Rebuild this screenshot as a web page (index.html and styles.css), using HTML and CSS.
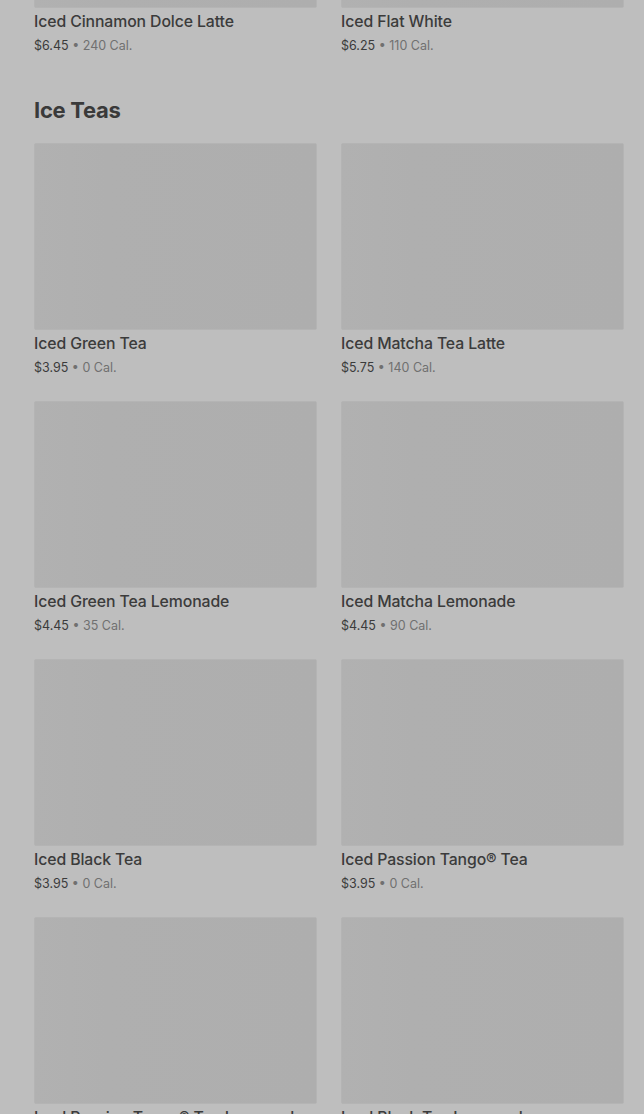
FILE: index.html
```html
<!DOCTYPE html>
<html lang="en">
<head>
    <meta charset="UTF-8">
    <meta name="viewport" content="width=device-width, initial-scale=1.0">
    <title>Menu - Ice Teas</title>
    <link rel="stylesheet" href="styles.css">
</head>
<body>
    <div class="menu-scroll">
        <!-- tail of the previous category, scrolled mostly out of view -->
        <section class="menu-category">
            <div class="product-grid">
                <div class="product-card">
                    <div class="product-image"></div>
                    <div class="product-name">Iced Cinnamon Dolce Latte</div>
                    <div class="product-meta"><span class="price">$6.45</span> • 240 Cal.</div>
                </div>
                <div class="product-card">
                    <div class="product-image"></div>
                    <div class="product-name">Iced Flat White</div>
                    <div class="product-meta"><span class="price">$6.25</span> • 110 Cal.</div>
                </div>
            </div>
        </section>

        <section class="menu-category">
            <h2 class="category-title">Ice Teas</h2>
            <div class="product-grid">
                <div class="product-card">
                    <div class="product-image"></div>
                    <div class="product-name">Iced Green Tea</div>
                    <div class="product-meta"><span class="price">$3.95</span> • 0 Cal.</div>
                </div>
                <div class="product-card">
                    <div class="product-image"></div>
                    <div class="product-name">Iced Matcha Tea Latte</div>
                    <div class="product-meta"><span class="price">$5.75</span> • 140 Cal.</div>
                </div>
                <div class="product-card">
                    <div class="product-image"></div>
                    <div class="product-name">Iced Green Tea Lemonade</div>
                    <div class="product-meta"><span class="price">$4.45</span> • 35 Cal.</div>
                </div>
                <div class="product-card">
                    <div class="product-image"></div>
                    <div class="product-name">Iced Matcha Lemonade</div>
                    <div class="product-meta"><span class="price">$4.45</span> • 90 Cal.</div>
                </div>
                <div class="product-card">
                    <div class="product-image"></div>
                    <div class="product-name">Iced Black Tea</div>
                    <div class="product-meta"><span class="price">$3.95</span> • 0 Cal.</div>
                </div>
                <div class="product-card">
                    <div class="product-image"></div>
                    <div class="product-name">Iced Passion Tango® Tea</div>
                    <div class="product-meta"><span class="price">$3.95</span> • 0 Cal.</div>
                </div>
                <div class="product-card">
                    <div class="product-image"></div>
                    <div class="product-name">Iced Passion Tango® Tea Lemonade</div>
                    <div class="product-meta"><span class="price">$4.45</span> • 70 Cal.</div>
                </div>
                <div class="product-card">
                    <div class="product-image"></div>
                    <div class="product-name">Iced Black Tea Lemonade</div>
                    <div class="product-meta"><span class="price">$4.45</span> • 70 Cal.</div>
                </div>
            </div>
        </section>
    </div>
</body>
</html>
```

FILE: styles.css
```css
:root {
    --page-bg: #bebebe;
    --image-bg: #afafaf;
    --text-color: #3b3b3b;
    --muted-color: #707070;
}

html, body {
    height: 100%;
    overflow: hidden;
}

body {
    margin: 0;
    background-color: var(--page-bg);
    font-family: Inter, "Noto Sans", sans-serif;
    color: var(--text-color);
}

/* page is scrolled: previous category's last row is mostly above the fold */
.menu-scroll {
    margin-top: -179px;
    padding: 0 20px 0 34px;
}

.menu-category {
    margin-bottom: 40px;
}

.category-title {
    margin: 0 0 18px;
    font-size: 22px;
    font-weight: 700;
    letter-spacing: -0.3px;
    line-height: 30px;
    color: #3a3a3a;
}

.product-grid {
    display: grid;
    grid-template-columns: 1fr 1fr;
    column-gap: 24px;
    row-gap: 24px;
}

.product-image {
    height: 185px;
    border: 1px solid #b4b4b4;
    border-radius: 2px;
    background: linear-gradient(90deg, #b1b1b1 0%, #afafaf 25%, #aeaeae 100%);
}

.product-name {
    margin-top: 3px;
    font-size: 15.8px;
    font-weight: 500;
    letter-spacing: -0.1px;
    line-height: 22px;
}

.product-meta {
    margin-top: 4px;
    font-size: 12.5px;
    line-height: 18px;
    color: var(--muted-color);
}

.price {
    color: var(--text-color);
}
```
